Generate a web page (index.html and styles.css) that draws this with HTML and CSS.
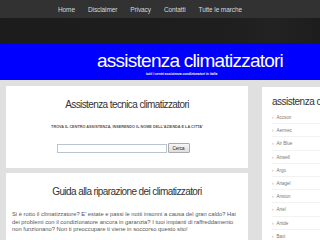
FILE: index.html
```html
<!DOCTYPE html>
<html>
<head>
	<meta charset="utf-8">
	<title>Assistenza climatizzatori</title>
	<link rel="stylesheet" href="styles.css">
</head>
<body>
	<div class="topnav">
		<a href="#">Home</a>
		<a href="#">Disclaimer</a>
		<a href="#">Privacy</a>
		<a href="#">Contatti</a>
		<a href="#">Tutte le marche</a>
	</div>
	<div class="band"></div>
	<div class="header">
		<h1>assistenza climatizzatori</h1>
		<div class="tagline">tutti i centri assistenza condizionatori in italia</div>
	</div>
	<div class="main">
		<div class="content">
			<div class="card">
				<h2>Assistenza tecnica climatizzatori</h2>
				<p class="caps">TROVA IL CENTRO ASSISTENZA, INSERENDO IL NOME DELL'AZIENDA E LA CITTA'</p>
				<div class="search">
					<input type="text" class="field">
					<button type="button" class="btn">Cerca</button>
				</div>
			</div>
			<div class="card">
				<h2>Guida alla riparazione dei climatizzatori</h2>
				<p class="text">Si è rotto il climatizzatore? E' estate e passi le notti insonni a causa del gran caldo? Hai dei problemi con il condizionatore ancora in garanzia? I tuoi impianti di raffreddamento non funzionano? Non ti preoccupare ti viene in soccorso questo sito!</p>
			</div>
		</div>
		<div class="sidebar">
			<h3>assistenza condizionatori</h3>
			<ul class="brands">
				<li>Accson</li>
				<li>Aermec</li>
				<li>Air Blue</li>
				<li>Airwell</li>
				<li>Argo</li>
				<li>Ariagel</li>
				<li>Ariston</li>
				<li>Artel</li>
				<li>Artide</li>
				<li>Baxi</li>
			</ul>
		</div>
	</div>
</body>
</html>
```
FILE: styles.css
```css
html, body {
	overflow: hidden;
}
body {
	margin: 0;
	width: 320px;
	height: 240px;
	font-family: "Liberation Sans", Arial, Helvetica, sans-serif;
	background-color: #e0e0e0;
}

.topnav {
	height: 18px;
	background-color: #323232;
	display: flex;
	align-items: center;
	gap: 13px;
	padding-left: 58px;
}
.topnav a {
	color: #d8d8d8;
	text-decoration: none;
	font-size: 6.5px;
	letter-spacing: -0.1px;
}

.band {
	height: 25px;
	background: linear-gradient(to right, #1c1c1c 0%, #1e1e1e 70%, #222 85%, #1d1d1d 100%);
}

.header {
	height: 37px;
	background-color: #0000ff;
	color: #fff;
	padding-left: 97px;
	box-sizing: border-box;
	padding-top: 8px;
}
.header h1 {
	margin: 0;
	font-size: 19px;
	line-height: 19px;
	font-weight: normal;
	letter-spacing: -0.75px;
	white-space: nowrap;
}
.tagline {
	font-size: 3.3px;
	font-weight: bold;
	font-style: italic;
	margin-left: 49px;
	margin-top: 2px;
	white-space: nowrap;
}

.main {
	display: flex;
	gap: 14px;
	padding: 6px 0 0 6px;
}
.content {
	width: 242px;
	flex-shrink: 0;
	display: flex;
	flex-direction: column;
	gap: 5px;
}
.card {
	background-color: #fff;
	padding: 13px 6px 0;
	text-align: center;
}
.card:first-child {
	height: 82px;
	box-sizing: border-box;
}
.card h2 {
	margin: 0;
	font-size: 10px;
	line-height: 12px;
	font-weight: normal;
	letter-spacing: -0.6px;
	color: #333;
}
.caps {
	margin: 14px 0 0;
	font-size: 3.8px;
	font-weight: bold;
	color: #555;
	white-space: nowrap;
}
.search {
	display: flex;
	justify-content: center;
	align-items: center;
	margin-top: 14px;
	margin-right: 8px;
}
.field {
	width: 110px;
	height: 9px;
	box-sizing: border-box;
	border: 1px solid #b8c4d0;
	padding: 0;
	margin: 0 1px 0 0;
}
.btn {
	width: 22px;
	height: 10px;
	padding: 0;
	font-size: 4.5px;
	font-family: "Liberation Sans", Arial, sans-serif;
	color: #222;
	background: linear-gradient(#f6f6f6, #dedede);
	border: 1px solid #aaa;
	border-radius: 1px;
}
.text {
	margin: 13px 0 0;
	text-align: left;
	font-size: 5.8px;
	line-height: 7.6px;
	color: #555;
	padding-bottom: 20px;
}

.sidebar {
	width: 120px;
	flex-shrink: 0;
	background-color: #fff;
	margin-top: 1px;
	padding: 9px 0 0 10px;
	overflow: hidden;
}
.sidebar h3 {
	margin: 0;
	font-size: 10px;
	line-height: 12px;
	font-weight: normal;
	letter-spacing: -0.5px;
	color: #333;
	white-space: nowrap;
}
.brands {
	list-style: none;
	margin: 3px 0 0;
	padding: 0;
}
.brands li {
	font-size: 4.5px;
	color: #777;
	height: 13.2px;
	line-height: 13.2px;
	border-bottom: 1px solid #f2f2f2;
	box-sizing: border-box;
}
.brands li::before {
	content: "›";
	margin-right: 3px;
	color: #999;
}
```
